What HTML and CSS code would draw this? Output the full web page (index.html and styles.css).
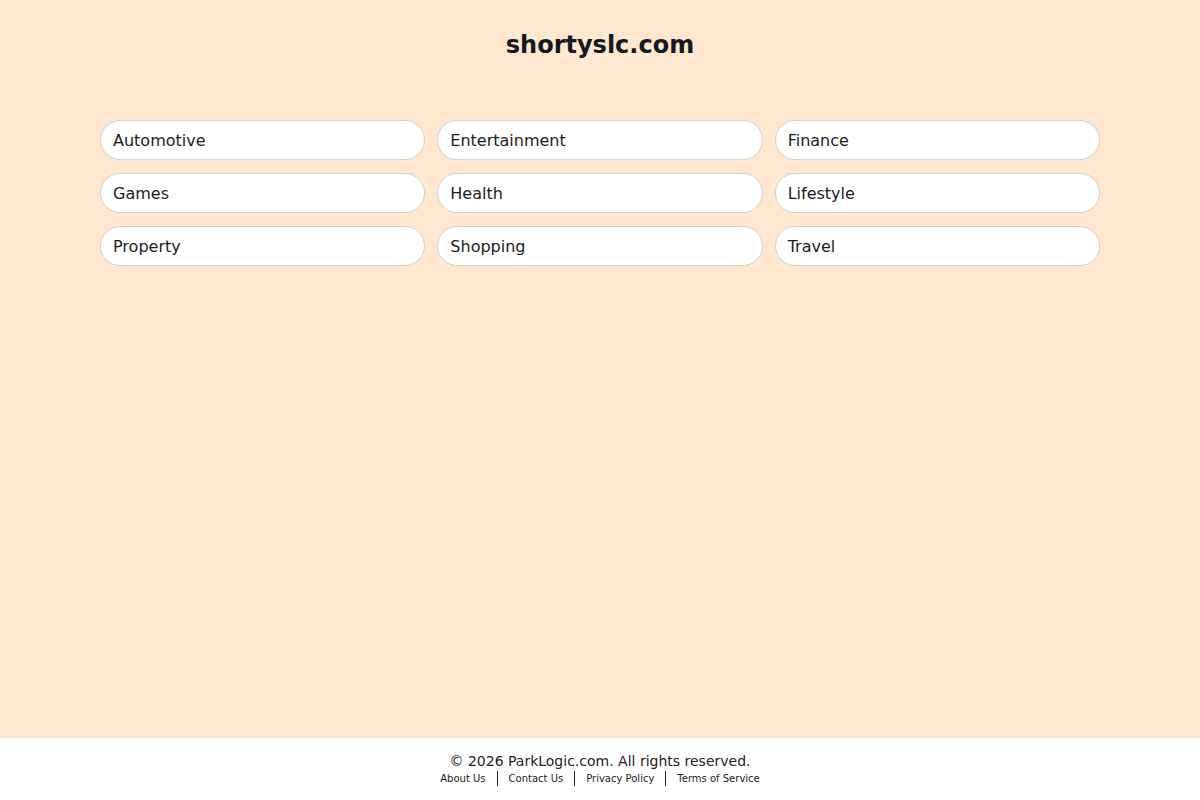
FILE: index.html
```html
<!DOCTYPE html>
<html lang="en">
<head>
  <meta charset="UTF-8">
  <meta name="viewport" content="width=device-width, initial-scale=1.0">
  <title>shortyslc.com</title>
  <link rel="stylesheet" href="styles.css">
</head>
<body>
  <div class="page">
    <h1 class="title">shortyslc.com</h1>
    <div class="links">
      <a class="link" href="#">Automotive</a>
      <a class="link" href="#">Entertainment</a>
      <a class="link" href="#">Finance</a>
      <a class="link" href="#">Games</a>
      <a class="link" href="#">Health</a>
      <a class="link" href="#">Lifestyle</a>
      <a class="link" href="#">Property</a>
      <a class="link" href="#">Shopping</a>
      <a class="link" href="#">Travel</a>
    </div>
  </div>
  <footer class="footer">
    <div class="copy">&copy; 2026 ParkLogic.com. All rights reserved.</div>
    <div class="footer-links">
      <a href="#">About Us</a>
      <a href="#">Contact Us</a>
      <a href="#">Privacy Policy</a>
      <a href="#">Terms of Service</a>
    </div>
  </footer>
</body>
</html>
```

FILE: styles.css
```css
* {
  box-sizing: border-box;
}
html, body {
  height: 100%;
}
body {
  margin: 0;
  display: flex;
  flex-direction: column;
  font-family: "DejaVu Sans", sans-serif;
  color: #1a1a1a;
  background: #ffe8cf;
}
.page {
  flex: 1;
  padding-top: 31px;
}
.title {
  margin: 0;
  font-size: 24px;
  line-height: 28px;
  text-align: center;
  color: #141820;
}
.links {
  width: 1000px;
  margin: 61px auto 0;
  display: grid;
  grid-template-columns: repeat(3, 1fr);
  column-gap: 12px;
  row-gap: 13px;
}
.link {
  display: block;
  height: 40px;
  line-height: 38px;
  padding: 1px 12px 0;
  background: #fff;
  border: 1px solid #d4d0cb;
  border-radius: 20px;
  font-size: 16px;
  color: #1c1c1c;
  text-decoration: none;
}
.footer {
  height: 63px;
  background: #fff;
  border-top: 1px solid #ece6df;
  padding-top: 14px;
  text-align: center;
}
.copy {
  font-size: 14px;
  line-height: 18px;
  color: #222;
}
.footer-links {
  display: flex;
  justify-content: center;
  margin-top: 1px;
  font-size: 10px;
  line-height: 15px;
}
.footer-links a {
  color: #222;
  text-decoration: none;
  padding: 0 11px;
}
.footer-links a + a {
  border-left: 1px solid #222;
}
```
